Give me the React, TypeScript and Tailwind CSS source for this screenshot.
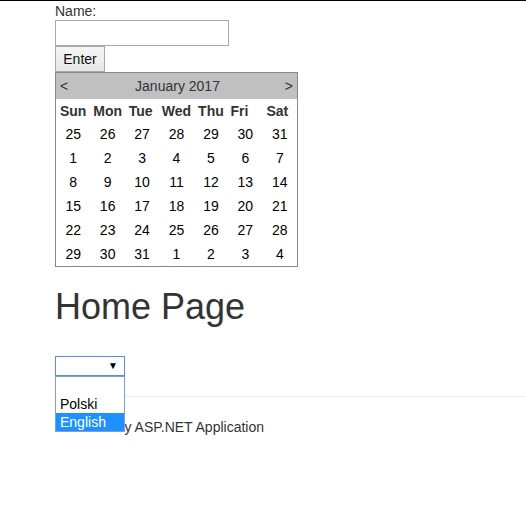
import React from "react";

const weeks: number[][] = [
  [25, 26, 27, 28, 29, 30, 31],
  [1, 2, 3, 4, 5, 6, 7],
  [8, 9, 10, 11, 12, 13, 14],
  [15, 16, 17, 18, 19, 20, 21],
  [22, 23, 24, 25, 26, 27, 28],
  [29, 30, 31, 1, 2, 3, 4],
];

const dayNames: { label: string; cls: string }[] = [
  { label: "Sun", cls: "" },
  { label: "Mon", cls: "" },
  { label: "Tue", cls: "pr-[3px]" },
  { label: "Wed", cls: "" },
  { label: "Thu", cls: "" },
  { label: "Fri", cls: "pr-[12px]" },
  { label: "Sat", cls: "pr-[5px]" },
];

export default function App() {
  return (
    <div
      className="min-h-[505px] bg-white text-[14px] leading-[20px] text-[#333]"
      style={{ fontFamily: '"Liberation Sans", Arial, sans-serif' }}
    >
      <div className="h-px bg-black" />
      <div className="pl-[55px]">
        <div className="h-[19px]">Name:</div>
        <div className="h-[26px] w-[174px] border border-[#a9a9a9] bg-white" />
        <button className="flex h-[26px] w-[50px] items-center justify-center border border-[#a9a9a9] bg-gradient-to-b from-[#f6f6f6] to-[#e6e6e6] text-[14px] text-[#111]">
          Enter
        </button>
        <div className="w-[243px] border border-[#888] bg-white">
          <div className="flex h-[26px] items-center justify-between bg-[#c0c0c0] px-[4px] text-[#333]">
            <span>&lt;</span>
            <span className="pl-[2px]">January 2017</span>
            <span>&gt;</span>
          </div>
          <div className="grid h-[23px] grid-cols-7 items-center">
            {dayNames.map((d) => (
              <div key={d.label} className={`text-center font-bold ${d.cls}`}>
                {d.label}
              </div>
            ))}
          </div>
          {weeks.map((w, i) => (
            <div key={i} className="grid h-[24px] grid-cols-7 items-center text-black">
              {w.map((n, j) => (
                <div key={j} className="text-center">
                  {n}
                </div>
              ))}
            </div>
          ))}
        </div>
        <h1 className="mt-[20px] text-[36px] leading-[39.6px] font-normal text-[#333]">
          Home Page
        </h1>
        <div className="relative mt-[29px] h-[20px] w-[70px]">
          <div className="flex h-[20px] w-[70px] items-center justify-end border border-[#5b8fd6] bg-white pr-[6px]">
            <span className="text-[10px] leading-none text-black">▼</span>
          </div>
          <div className="absolute top-[20px] left-0 z-10 w-[70px] border border-[#7b9fd8] bg-white text-[14px] leading-[18px] text-black">
            <div className="h-[18px] px-[4px]" />
            <div className="h-[18px] px-[4px]">Polski</div>
            <div className="h-[18px] bg-[#1e90ff] px-[4px] text-white">English</div>
          </div>
        </div>
        <div className="mt-[20px] h-px bg-[#eee]" />
        <p className="mt-[20px]">© 2017 - My ASP.NET Application</p>
      </div>
    </div>
  );
}
